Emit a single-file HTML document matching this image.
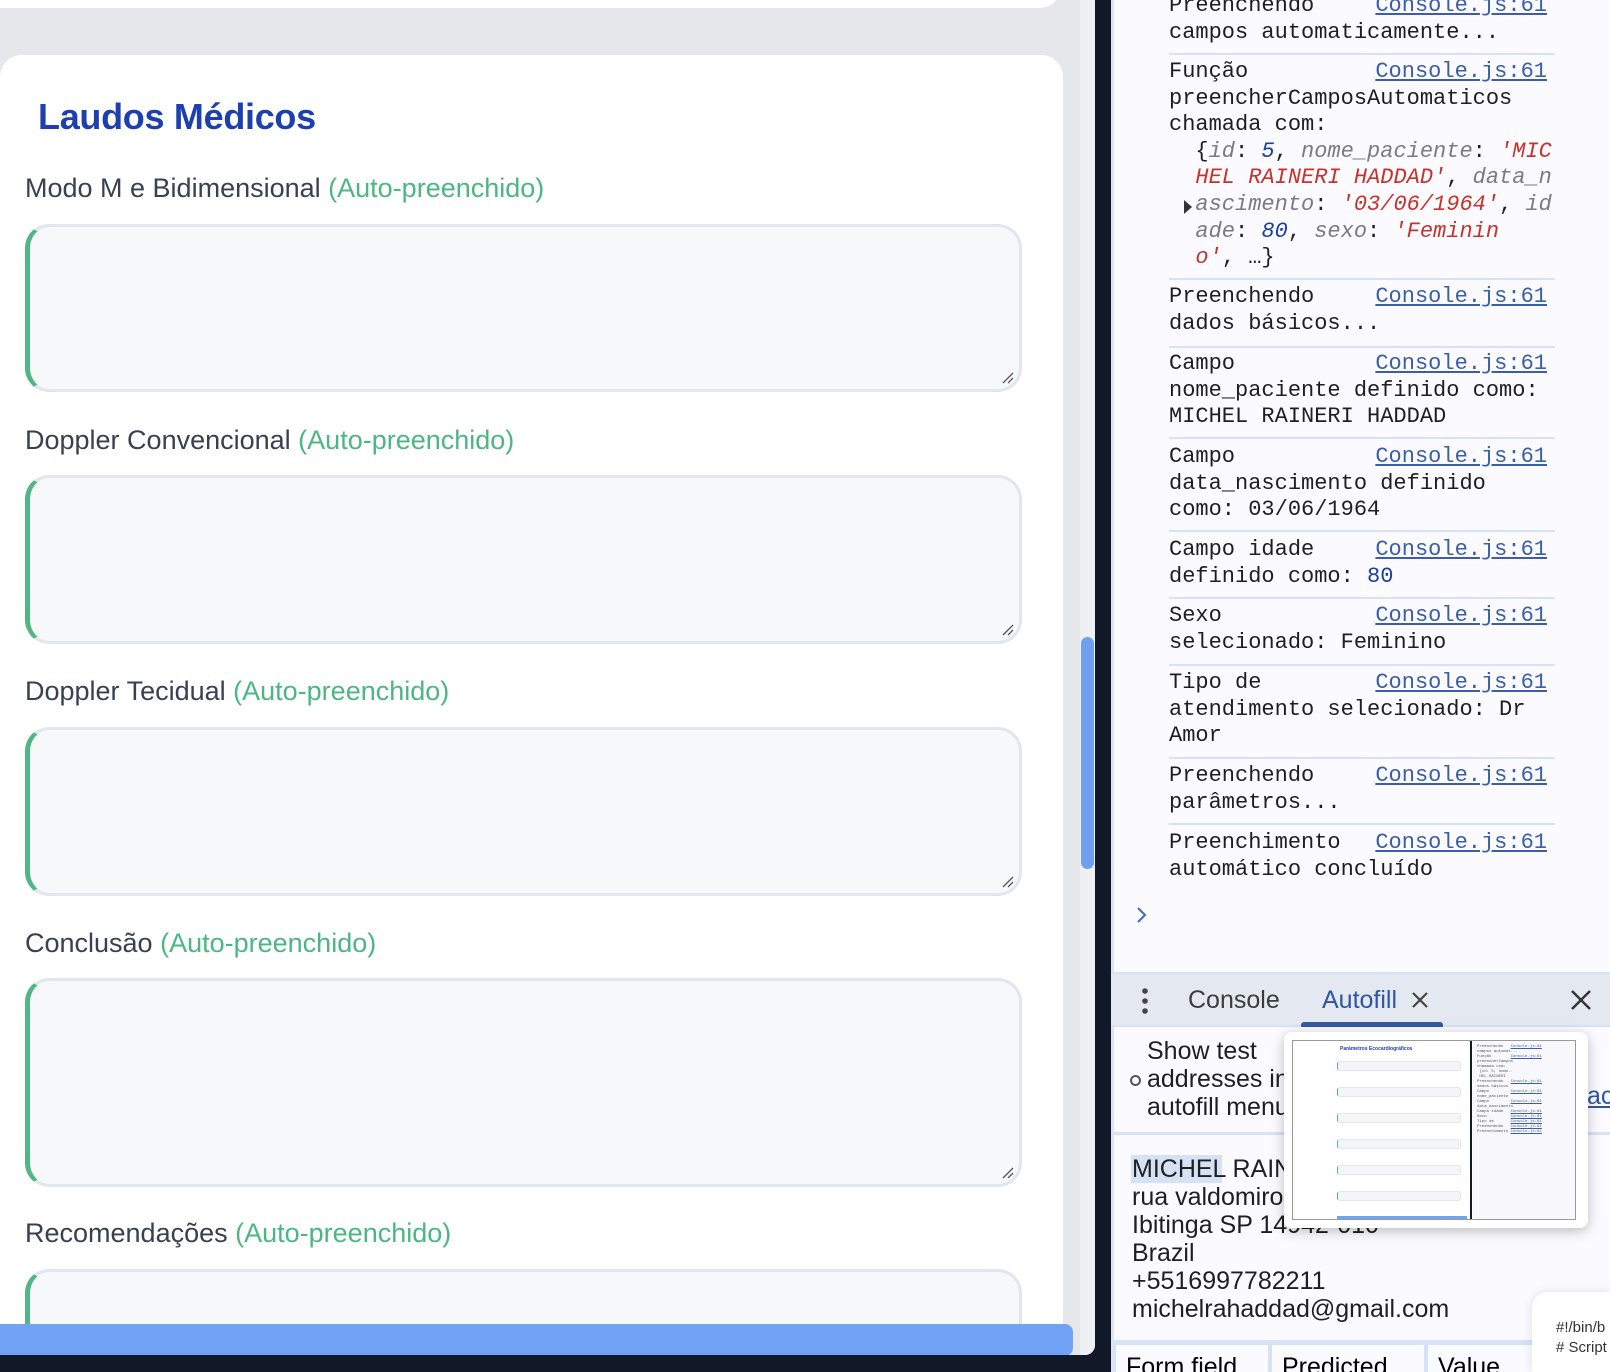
<!DOCTYPE html>
<html><head><meta charset="utf-8"><style>
*{box-sizing:border-box;margin:0;padding:0}
html,body{width:1610px;height:1372px;overflow:hidden}
body{background:#111827;font-family:"Liberation Sans",sans-serif;position:relative}
.abs{position:absolute}
#page{left:0;top:0;width:1095px;height:1355px;background:#e5e7eb;overflow:hidden;border-bottom-right-radius:10px}
.card1{left:-20px;top:-40px;width:1080px;height:48px;background:#fff;border-radius:20px}
.card2{left:0;top:55px;width:1063px;height:1400px;background:#fff;border-radius:22px}
h1{position:absolute;left:38px;top:96px;font-size:36px;font-weight:bold;color:#1e40af;letter-spacing:-0.3px}
.lbl{position:absolute;left:25px;font-size:27px;color:#374151}
.lbl span{color:#4cb782}
.ta{position:absolute;left:25px;width:997px;background:#f7f8fa;border:3px solid #e2e6ee;border-left:5px solid #53b584;border-radius:24px}
.rz{position:absolute;right:5px;bottom:5px;width:14px;height:14px}
#track{left:1080px;top:0;width:15px;height:1355px;background:#eef0f4}
#thumb{left:1081px;top:637px;width:13px;height:232px;background:#6fa0ef;border-radius:7px}
#bar{left:0;top:1324px;width:1073px;height:32px;background:#70a3f3;border-radius:0 8px 8px 0}
#dev{left:1111px;top:0;width:499px;height:1372px;background:#fbfbff;border-left:3px solid #dbe4f5;overflow:hidden}
.con{position:absolute;left:55px;width:378px;font-family:"Liberation Mono",monospace;font-size:22px;line-height:26.6px;color:#1f1f1f;white-space:pre}
.lnk{position:absolute;right:0;top:0;color:#3a5ea8;text-decoration:underline}
.sep{position:absolute;left:55px;width:386px;height:2px;background:#d6e2f5}
.g{color:#7a7a80;font-style:italic}.r{color:#c5342c;font-style:italic}.b{color:#1a3fa0;font-style:italic}
#tabs{left:1111px;top:972px;width:499px;height:55px;background:#e4e8f0;border-top:2px solid #d6e2f5;border-bottom:2px solid #d6e2f5}
.addr{position:absolute;left:1132px;font-size:25px;line-height:28px;color:#1f1f1f}
</style></head><body>
<div id="page" class="abs">
 <div class="abs card1"></div>
 <div class="abs card2"></div>
 <h1>Laudos Médicos</h1>
 <div class="lbl" style="top:173px">Modo M e Bidimensional <span>(Auto-preenchido)</span></div>
 <div class="ta" style="top:224px;height:168px"><svg class="rz" viewBox="0 0 14 14"><path d="M13 3L3 13M13 8L8 13" stroke="#555" stroke-width="1.3"/></svg></div>
 <div class="lbl" style="top:425px">Doppler Convencional <span>(Auto-preenchido)</span></div>
 <div class="ta" style="top:475px;height:169px"><svg class="rz" viewBox="0 0 14 14"><path d="M13 3L3 13M13 8L8 13" stroke="#555" stroke-width="1.3"/></svg></div>
 <div class="lbl" style="top:676px">Doppler Tecidual <span>(Auto-preenchido)</span></div>
 <div class="ta" style="top:727px;height:169px"><svg class="rz" viewBox="0 0 14 14"><path d="M13 3L3 13M13 8L8 13" stroke="#555" stroke-width="1.3"/></svg></div>
 <div class="lbl" style="top:928px">Conclusão <span>(Auto-preenchido)</span></div>
 <div class="ta" style="top:978px;height:209px"><svg class="rz" viewBox="0 0 14 14"><path d="M13 3L3 13M13 8L8 13" stroke="#555" stroke-width="1.3"/></svg></div>
 <div class="lbl" style="top:1218px">Recomendações <span>(Auto-preenchido)</span></div>
 <div class="ta" style="top:1269px;height:160px"></div>
 <div id="track" class="abs"></div>
 <div id="thumb" class="abs"></div>
 <div id="bar" class="abs"></div>
</div>
<div id="dev" class="abs">
 <div class="con" style="top:-7px">Preenchendo
campos automaticamente...<span class="lnk">Console.js:61</span></div>
 <div class="sep" style="top:53px"></div>
 <div class="con" style="top:59px">Função
preencherCamposAutomaticos
chamada com:
  {<span class="g">id</span>: <span class="b">5</span>, <span class="g">nome_paciente</span>: <span class="r">'MIC</span>
  <span class="r">HEL RAINERI HADDAD'</span>, <span class="g">data_n</span>
  <span class="g">ascimento</span>: <span class="r">'03/06/1964'</span>, <span class="g">id</span>
  <span class="g">ade</span>: <span class="b">80</span>, <span class="g">sexo</span>: <span class="r">'Feminin</span>
  <span class="r">o'</span>, …}<span class="lnk">Console.js:61</span></div>
 <svg class="abs" style="left:70px;top:200px" width="9" height="14"><path d="M0 0L8 7L0 14Z" fill="#333"/></svg>
 <div class="sep" style="top:278px"></div>
 <div class="con" style="top:284px">Preenchendo
dados básicos...<span class="lnk">Console.js:61</span></div>
 <div class="sep" style="top:346px"></div>
 <div class="con" style="top:351px">Campo
nome_paciente definido como:
MICHEL RAINERI HADDAD<span class="lnk">Console.js:61</span></div>
 <div class="sep" style="top:437px"></div>
 <div class="con" style="top:444px">Campo
data_nascimento definido
como: 03/06/1964<span class="lnk">Console.js:61</span></div>
 <div class="sep" style="top:530px"></div>
 <div class="con" style="top:537px">Campo idade
definido como: <span style="color:#1a3fa0">80</span><span class="lnk">Console.js:61</span></div>
 <div class="sep" style="top:597px"></div>
 <div class="con" style="top:603px">Sexo
selecionado: Feminino<span class="lnk">Console.js:61</span></div>
 <div class="sep" style="top:664px"></div>
 <div class="con" style="top:670px">Tipo de
atendimento selecionado: Dr
Amor<span class="lnk">Console.js:61</span></div>
 <div class="sep" style="top:757px"></div>
 <div class="con" style="top:763px">Preenchendo
parâmetros...<span class="lnk">Console.js:61</span></div>
 <div class="sep" style="top:823px"></div>
 <div class="con" style="top:830px">Preenchimento
automático concluído<span class="lnk">Console.js:61</span></div>
 <svg class="abs" style="left:22px;top:906px" width="12" height="18"><path d="M2 2L9 9L2 16" fill="none" stroke="#4a6fb5" stroke-width="2.2"/></svg>
</div>
<div id="tabs" class="abs">
 <svg class="abs" style="left:30px;top:14px" width="8" height="26"><circle cx="4" cy="3" r="2.8" fill="#444"/><circle cx="4" cy="13" r="2.8" fill="#444"/><circle cx="4" cy="23" r="2.8" fill="#444"/></svg>
 <div class="abs" style="left:77px;top:12px;font-size:25px;color:#3c3c3c">Console</div>
 <div class="abs" style="left:211px;top:12px;font-size:25px;color:#2f56a0">Autofill</div>
 <svg class="abs" style="left:300px;top:17px" width="18" height="18"><path d="M2 2L16 16M16 2L2 16" stroke="#444" stroke-width="2.2"/></svg>
 <div class="abs" style="left:190px;top:48px;width:142px;height:5px;background:#34599e;border-radius:3px 3px 0 0"></div>
 <svg class="abs" style="left:459px;top:15px" width="22" height="22"><path d="M2 2L20 20M20 2L2 20" stroke="#333" stroke-width="2.4"/></svg>
</div>
<div class="abs" style="left:1114px;top:1027px;width:496px;height:345px;background:#fbfbff"></div>
<div class="abs" style="left:1147px;top:1037px;font-size:25px;line-height:28px;color:#1f1f1f">Show test<br>addresses in<br>autofill menu</div>
<div class="abs" style="left:1130px;top:1075px;width:11px;height:11px;border:2px solid #555;border-radius:50%"></div>
<div class="abs" style="left:1587px;top:1082px;font-size:25px;color:#2f56a0;text-decoration:underline">ac</div>
<div class="abs" style="left:1114px;top:1132px;width:496px;height:3px;background:#d6e2f5"></div>
<div class="abs" style="left:1131px;top:1155px;width:91px;height:28px;background:#d5e1f5"></div>
<div class="addr" style="top:1155px">MICHEL RAINERI HADDAD<br>rua valdomiro 1234<br>Ibitinga SP 14942-010<br>Brazil<br>+5516997782211<br>michelrahaddad@gmail.com</div>
<div class="abs" style="left:1114px;top:1340px;width:496px;height:32px;background:#d6e2f5"></div>
<div class="abs" style="left:1116px;top:1345px;width:152px;height:27px;background:#fbfbff;font-size:25px;padding-left:10px;padding-top:8px;overflow:hidden">Form field</div>
<div class="abs" style="left:1272px;top:1345px;width:152px;height:27px;background:#fbfbff;font-size:25px;padding-left:10px;padding-top:8px;overflow:hidden">Predicted</div>
<div class="abs" style="left:1428px;top:1345px;width:110px;height:27px;background:#fbfbff;font-size:25px;padding-left:10px;padding-top:8px;overflow:hidden">Value</div>
<div class="abs" style="left:1284px;top:1032px;width:304px;height:196px;background:#fff;border-radius:8px;box-shadow:0 3px 12px rgba(0,0,0,.25)">
 <div class="abs" style="left:8px;top:8px;width:284px;height:180px;border:1px solid #999;background:#fff;overflow:hidden">
  <div class="abs" style="left:47px;top:5px;font-size:5px;color:#1e40af;font-weight:bold">Parâmetros Ecocardiográficos</div>
  <div class="abs" style="left:44px;top:20px;width:124px;height:10px;background:#f3f5f8;border:1px solid #e3e6ec;border-left:1px solid #53b584;border-radius:3px"></div>
  <div class="abs" style="left:44px;top:46px;width:124px;height:10px;background:#f3f5f8;border:1px solid #e3e6ec;border-left:1px solid #53b584;border-radius:3px"></div>
  <div class="abs" style="left:44px;top:72px;width:124px;height:10px;background:#f3f5f8;border:1px solid #e3e6ec;border-left:1px solid #53b584;border-radius:3px"></div>
  <div class="abs" style="left:44px;top:98px;width:124px;height:10px;background:#f3f5f8;border:1px solid #e3e6ec;border-left:1px solid #53b584;border-radius:3px"></div>
  <div class="abs" style="left:44px;top:124px;width:124px;height:10px;background:#f3f5f8;border:1px solid #e3e6ec;border-left:1px solid #53b584;border-radius:3px"></div>
  <div class="abs" style="left:44px;top:150px;width:124px;height:10px;background:#f3f5f8;border:1px solid #e3e6ec;border-left:1px solid #53b584;border-radius:3px"></div>
  <div class="abs" style="left:44px;top:175px;width:130px;height:4px;background:#70a3f3"></div>
  <div class="abs" style="left:177px;top:0;width:2px;height:180px;background:#111827"></div>
  <div class="abs" style="left:180px;top:0;width:104px;height:180px;background:#f8f8fc;font-family:'Liberation Mono',monospace;font-size:4px;line-height:5px;color:#555;padding:4px;white-space:pre">Preenchendo   <u style="color:#3a5ea8">Console.js:61</u>
campos automat...
Função        <u style="color:#3a5ea8">Console.js:61</u>
preencherCampos
chamada com:
 {id: 5, nome..
 HEL RAINERI
Preenchendo   <u style="color:#3a5ea8">Console.js:61</u>
dados básicos
Campo         <u style="color:#3a5ea8">Console.js:61</u>
nome_paciente
Campo         <u style="color:#3a5ea8">Console.js:61</u>
data_nascimento
Campo idade   <u style="color:#3a5ea8">Console.js:61</u>
Sexo          <u style="color:#3a5ea8">Console.js:61</u>
Tipo de       <u style="color:#3a5ea8">Console.js:61</u>
Preenchendo   <u style="color:#3a5ea8">Console.js:61</u>
Preenchimento <u style="color:#3a5ea8">Console.js:61</u></div>
 </div>
</div>
<div class="abs" style="left:1532px;top:1292px;width:78px;height:80px;background:#fff;border-radius:16px 0 0 0;box-shadow:0 0 10px rgba(0,0,0,.12);font-size:15px;line-height:20px;color:#333;padding:26px 0 0 24px;white-space:nowrap;overflow:hidden">#!/bin/b<br># Script</div>
</body></html>
